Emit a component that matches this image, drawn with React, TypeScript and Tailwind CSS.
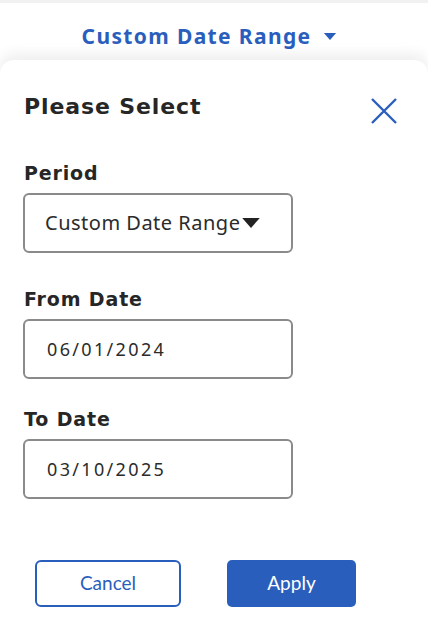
import React, { useState } from 'react';

const HEAD = "font-['DejaVu_Sans','Lato',sans-serif]";
const BODY = "font-['Noto_Sans','Open_Sans',sans-serif]";
const BTN = "font-['Lato','Inter',sans-serif]";

const Caret: React.FC<{ className?: string }> = ({ className }) => (
  <svg viewBox="0 0 14 8" className={className} fill="currentColor">
    <path d="M0 0h14L7 8z" />
  </svg>
);

const Field: React.FC<{ label: string; className?: string; children: React.ReactNode }> = ({ label, className, children }) => (
  <div className={`flex flex-col ${className ?? ''}`}>
    <label className={`${HEAD} text-[19px] font-bold tracking-[0.045em] text-[#262626] leading-[22px] mb-[9px]`}>{label}</label>
    {children}
  </div>
);

const boxCls = `${BODY} h-[60px] border-2 border-[#8a8a8a] rounded-[6px] flex items-center text-[#2b2b2b] -ml-px`;

const App: React.FC = () => {
  const [from] = useState('06/01/2024');
  const [to] = useState('03/10/2025');

  return (
    <div className="w-[428px] h-[640px] bg-white overflow-hidden flex flex-col">
      <div className="h-[3px] bg-[#f1f1f1]" />
      <div className="h-[57px] flex items-start justify-center pt-[20px] pr-[9px]">
        <button className={`${BODY} flex items-center gap-[12px] text-[21px] font-bold tracking-[0.065em] text-[#2a5ebd] leading-[26px]`}>
          Custom Date Range
          <Caret className="w-[14px] h-[7px]" />
        </button>
      </div>
      <div className="flex-1 rounded-t-[14px] bg-white shadow-[0_-6px_14px_rgba(0,0,0,0.07)] px-[24px] pt-[30px]">
        <div className="flex items-center justify-between">
          <h2 className={`${HEAD} text-[22px] font-bold tracking-[0.04em] text-[#262626] leading-[26px]`}>Please Select</h2>
          <button className="mr-[7px] mt-[8px] text-[#2a5ebd]">
            <svg viewBox="0 0 26 26" className="w-[26px] h-[26px]" stroke="currentColor" strokeWidth="2.4" fill="none">
              <path d="M1 1l24 24M25 1L1 25" />
            </svg>
          </button>
        </div>

        <div className="flex flex-col w-[269px] mt-[38px]">
          <Field label="Period">
            <div className={`${boxCls} pl-[20px] text-[20px] tracking-[0.025em]`}>
              Custom Date Range
              <Caret className="w-[20px] h-[10px] ml-[1px] text-[#222]" />
            </div>
          </Field>
          <Field label="From Date" className="mt-[35px]">
            <div className={`${boxCls} pl-[22px] text-[18px] tracking-[0.13em]`}>{from}</div>
          </Field>
          <Field label="To Date" className="mt-[29px]">
            <div className={`${boxCls} pl-[22px] text-[18px] tracking-[0.13em]`}>{to}</div>
          </Field>
        </div>

        <div className="flex gap-[46px] mt-[61px] ml-[11px]">
          <button className={`${BTN} w-[146px] h-[47px] border-2 border-[#2a5ebd] rounded-[6px] text-[19px] text-[#2a5ebd]`}>Cancel</button>
          <button className={`${BTN} w-[129px] h-[47px] bg-[#2a5ebd] rounded-[5px] text-[19px] text-white`}>Apply</button>
        </div>
      </div>
    </div>
  );
};

export default App;
